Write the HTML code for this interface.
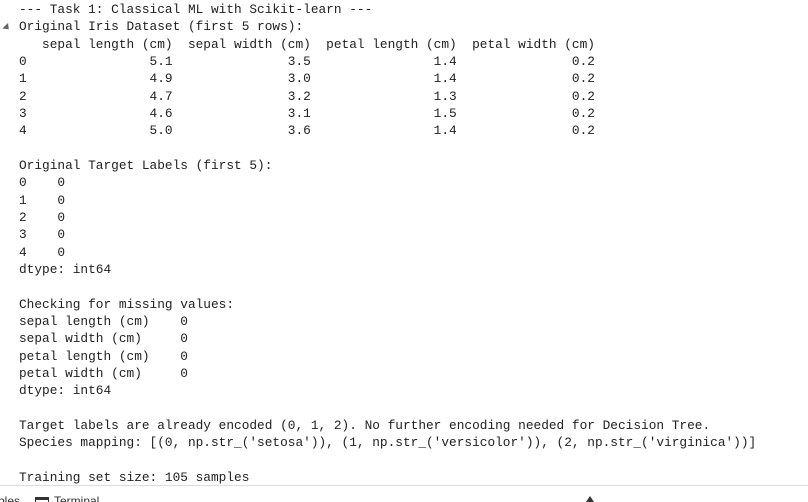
<!DOCTYPE html>
<html><head><style>
html,body{margin:0;padding:0;background:#fff;width:808px;height:502px;overflow:hidden;position:relative}
pre{position:absolute;left:19px;top:1px;margin:0;font-family:"Liberation Mono",monospace;font-size:12.8px;line-height:17.33px;color:#212121}
.arrow{position:absolute;left:3px;top:25px;width:0;height:0;border-left:4px solid transparent;border-right:4px solid transparent;border-top:5px solid #666;transform:rotate(-45deg)}
.bar{position:absolute;left:0;top:485px;width:808px;height:17px;border-top:1px solid #ddd;background:#fff;font-family:"Liberation Sans",sans-serif;font-size:12px;color:#333}
</style></head><body>
<div class="arrow"></div>
<pre>--- Task 1: Classical ML with Scikit-learn ---
Original Iris Dataset (first 5 rows):
   sepal length (cm)  sepal width (cm)  petal length (cm)  petal width (cm)
0                5.1               3.5                1.4               0.2
1                4.9               3.0                1.4               0.2
2                4.7               3.2                1.3               0.2
3                4.6               3.1                1.5               0.2
4                5.0               3.6                1.4               0.2

Original Target Labels (first 5):
0    0
1    0
2    0
3    0
4    0
dtype: int64

Checking for missing values:
sepal length (cm)    0
sepal width (cm)     0
petal length (cm)    0
petal width (cm)     0
dtype: int64

Target labels are already encoded (0, 1, 2). No further encoding needed for Decision Tree.
Species mapping: [(0, np.str_('setosa')), (1, np.str_('versicolor')), (2, np.str_('virginica'))]

Training set size: 105 samples</pre>
<div class="bar">
<span style="position:absolute;left:-2px;top:8px">bles</span>
<span style="position:absolute;left:35px;top:11px;width:12px;height:8px;border:1.5px solid #333;border-top-width:3px"></span>
<span style="position:absolute;left:54px;top:8px">Terminal</span>
<span style="position:absolute;left:586px;top:10px;width:0;height:0;border-left:4px solid transparent;border-right:4px solid transparent;border-bottom:6px solid #333"></span>
</div>
</body></html>
